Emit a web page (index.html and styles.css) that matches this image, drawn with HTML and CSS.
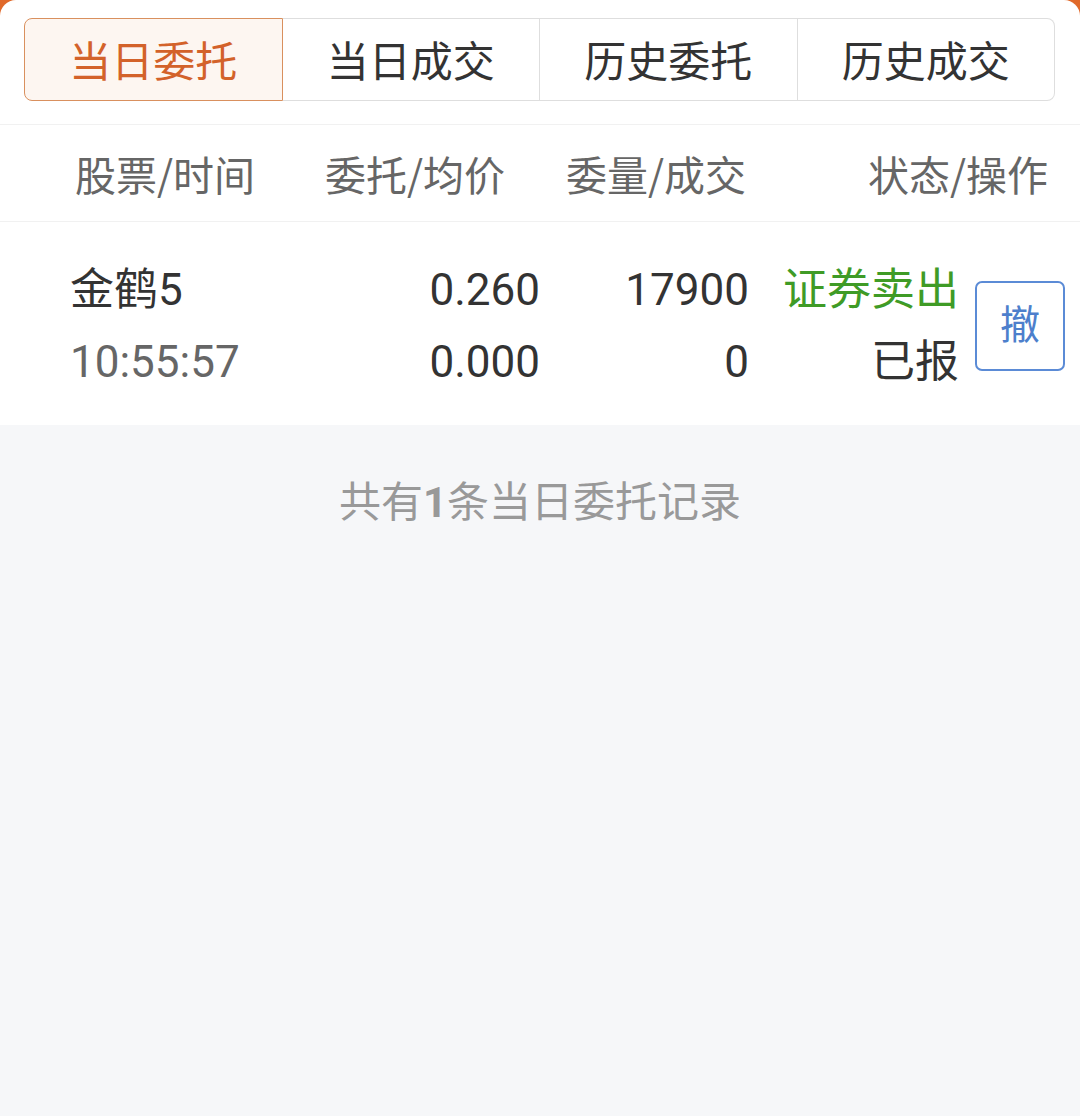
FILE: index.html
```html
<!DOCTYPE html>
<html lang="zh-CN">
<head>
<meta charset="utf-8">
<title>当日委托</title>
<link rel="stylesheet" href="styles.css">
</head>
<body>
<div class="panel">
  <div class="tabs">
    <div class="tab active">当日委托</div>
    <div class="tab">当日成交</div>
    <div class="tab">历史委托</div>
    <div class="tab">历史成交</div>
  </div>
  <div class="head">
    <div class="h1">股票/时间</div>
    <div class="h2">委托/均价</div>
    <div class="h3">委量/成交</div>
    <div class="h4">状态/操作</div>
  </div>
  <div class="row">
    <div class="c1">
      <div class="name">金鹤5</div>
      <div class="time">10:55:57</div>
    </div>
    <div class="cn">
      <div>0.260</div>
      <div>0.000</div>
    </div>
    <div class="cn">
      <div>17900</div>
      <div>0</div>
    </div>
    <div class="cn">
      <div class="sell">证券卖出</div>
      <div>已报</div>
    </div>
    <div class="act"><div class="btn">撤</div></div>
  </div>
  <div class="foot">共有<b>1</b>条当日委托记录</div>
</div>
</body>
</html>
```
FILE: styles.css
```css
html, body {
  margin: 0;
  padding: 0;
}
body {
  background: #e0692a;
  font-family: Roboto, "Noto Sans CJK SC", sans-serif;
  color: #333;
}
.panel {
  background: #fff;
  border-radius: 16px 16px 0 0;
  min-height: 1116px;
  display: flex;
  flex-direction: column;
  overflow: hidden;
}
.tabs {
  display: flex;
  margin: 18px 25px 0 24px;
  height: 83px;
}
.tab {
  flex: 1;
  display: flex;
  align-items: center;
  justify-content: center;
  font-size: 42px;
  color: #333;
  border: 1px solid #dedede;
  border-left: none;
  padding-bottom: 3px;
  font-family: "Noto Sans CJK SC", sans-serif;
}
.tab:first-child {
  border-radius: 8px 0 0 8px;
}
.tab:last-child {
  border-radius: 0 8px 8px 0;
}
.tab.active {
  color: #d3622a;
  background: #fdf6f1;
  border: 1px solid #d9905e;
}
.head {
  margin-top: 23px;
  height: 96px;
  border-top: 1px solid #f1f1f1;
  border-bottom: 1px solid #f1f1f1;
  display: grid;
  grid-template-columns: 250px 241px 182px 1fr;
  align-items: center;
  padding: 0 32px 0 75px;
  font-size: 41px;
  color: #666;
  font-family: "Noto Sans CJK SC", sans-serif;
}
.h4 {
  text-align: right;
}
.row {
  display: grid;
  grid-template-columns: 260px 210px 209px 210px 1fr;
  padding: 32px 0 27px 70px;
  align-items: center;
  font-size: 44px;
  line-height: 72px;
  color: #333;
}
.c1 .time {
  color: #666;
}
.cn {
  text-align: right;
}
.sell {
  color: #3f9b26;
}
.act {
  display: flex;
  padding-left: 16px;
}
.btn {
  width: 86px;
  height: 86px;
  border: 2px solid #5b8bd6;
  border-radius: 7px;
  color: #4d7fcc;
  display: flex;
  align-items: center;
  justify-content: center;
  font-size: 40px;
  line-height: 1;
}
.foot {
  flex: 1;
  background: #f6f7f9;
  text-align: center;
  padding-top: 44px;
  line-height: 60px;
  font-size: 42px;
  color: #999;
  font-family: "Noto Sans CJK SC", sans-serif;
}
.foot b {
  font-family: Roboto, sans-serif;
  font-weight: 700;
}
```
